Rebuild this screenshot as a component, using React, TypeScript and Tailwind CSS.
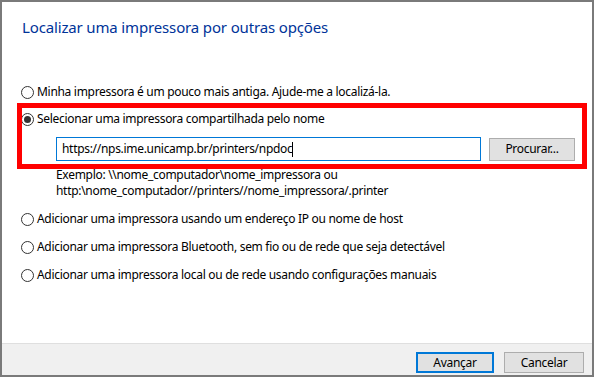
import type { ReactNode } from 'react'

function Radio({ checked, children }: { checked?: boolean; children: ReactNode }) {
  return (
    <div className="flex items-center h-[16px] pl-[19px]">
      <span className="w-[13px] h-[13px] rounded-full border border-[#333333] bg-white flex items-center justify-center shrink-0">
        {checked && <span className="w-[7px] h-[7px] rounded-full bg-[#333333]" />}
      </span>
      <span className="ml-[3px] whitespace-nowrap leading-[16px]">{children}</span>
    </div>
  )
}

export default function App() {
  return (
    <div className="relative w-[594px] h-[377px] border-2 border-[#7a7a7a] bg-white flex flex-col text-[12px] tracking-[-0.3px] text-black font-['Segoe_UI','Noto_Sans',sans-serif]">
      <div className="flex-1 flex flex-col pt-[15px]">
        <div className="pl-[20px] text-[15px] leading-[20px] tracking-[-0.15px] text-[#003399]">
          Localizar uma impressora por outras opções
        </div>

        <div className="mt-[47px] flex flex-col">
          <Radio>Minha impressora é um pouco mais antiga. Ajude-me a localizá-la.</Radio>
          <div className="mt-[11px]">
            <Radio checked>Selecionar uma impressora compartilhada pelo nome</Radio>
          </div>

          <div className="mt-[10px] pl-[54px] flex items-center">
            <div className="w-[425px] h-[24px] border border-[#0078d7] flex items-center pl-[5px] leading-[16px]">
              https://nps.ime.unicamp.br/printers/npdoc
              <span className="w-px h-[15px] bg-black" />
            </div>
            <div className="ml-[8px] w-[86px] h-[23px] border border-[#adadad] bg-[#e1e1e1] flex items-center justify-center">
              Procurar...
            </div>
          </div>

          <div className="mt-[6px] pl-[54px] leading-[16px]">
            <div>Exemplo: \\nome_computador\nome_impressora ou</div>
            <div>http:\nome_computador//printers//nome_impressora/.printer</div>
          </div>

          <div className="mt-[12px] flex flex-col gap-[12px]">
            <Radio>Adicionar uma impressora usando um endereço IP ou nome de host</Radio>
            <Radio>Adicionar uma impressora Bluetooth, sem fio ou de rede que seja detectável</Radio>
            <Radio>Adicionar uma impressora local ou de rede usando configurações manuais</Radio>
          </div>
        </div>
      </div>

      <div className="h-[32px] border-t border-[#dfdfdf] bg-[#f0f0f0] flex justify-end items-start pt-[8px] pr-[8px] gap-[10px]">
        <div className="w-[78px] h-[21px] border-2 border-[#0078d7] bg-[#e1e1e1] flex items-center justify-center">
          Avançar
        </div>
        <div className="w-[80px] h-[21px] border border-[#adadad] bg-[#e1e1e1] flex items-center justify-center">
          Cancelar
        </div>
      </div>

      {/* red annotation box */}
      <div className="absolute left-[15px] top-[101px] w-[570px] h-[66px] border-[5px] border-[#ff0000] pointer-events-none" />
    </div>
  )
}
